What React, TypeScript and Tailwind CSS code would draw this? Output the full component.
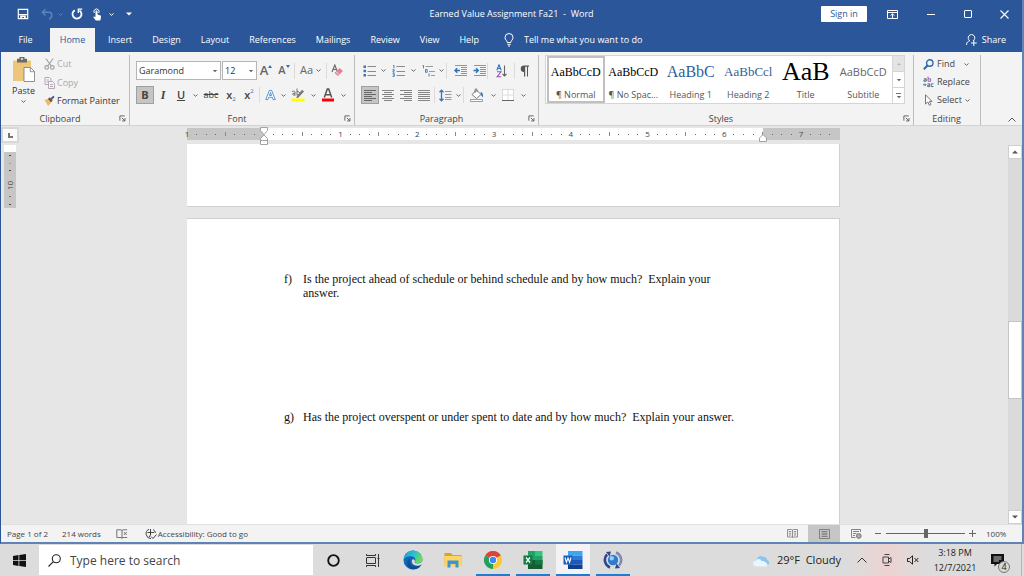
import React, { useState } from "react";

const TABS = ["Insert", "Design", "Layout", "References", "Mailings", "Review", "View", "Help"];

const STYLES = [
  { name: "¶ Normal", sample: "AaBbCcD", look: "text-[12px] text-black" },
  { name: "¶ No Spac...", sample: "AaBbCcD", look: "text-[12px] text-black" },
  { name: "Heading 1", sample: "AaBbC", look: "text-[16px] text-[#2f5f98]" },
  { name: "Heading 2", sample: "AaBbCcl", look: "text-[13px] text-[#2f5f98]" },
  { name: "Title", sample: "AaB", look: "text-[26px] text-black" },
  { name: "Subtitle", sample: "AaBbCcD", look: "font-['Open_Sans',sans-serif] text-[11px] text-[#666]" },
];

function Chevron({ className = "text-[#666]" }: { className?: string }) {
  return (
    <svg viewBox="0 0 5 3" className={`w-[5px] h-[3px] shrink-0 ${className}`} fill="none" stroke="currentColor" strokeWidth="1">
      <path d="M0.5 0.5L2.5 2.3L4.5 0.5" />
    </svg>
  );
}

function Triangle({ up = false, className = "text-[#555]" }: { up?: boolean; className?: string }) {
  return (
    <svg viewBox="0 0 6 4" className={`w-[6px] h-[4px] shrink-0 ${className}`} fill="currentColor">
      <path d={up ? "M0 3.5L3 0.5L6 3.5Z" : "M0 0.5L3 3.5L6 0.5Z"} />
    </svg>
  );
}

interface ToolProps {
  label: string;
  width?: string;
  active?: boolean;
  children: React.ReactNode;
}

function Tool({ label, width = "w-[18px]", active = false, children }: ToolProps) {
  return (
    <button
      aria-label={label}
      title={label}
      className={`${width} h-[18px] shrink-0 flex items-center justify-center ${
        active ? "bg-[#c5c5c5] border border-[#a0a0a0]" : "hover:bg-[#d5d5d5]"
      }`}
    >
      {children}
    </button>
  );
}

function Divider() {
  return <span className="w-px h-4 mx-px shrink-0 bg-[#dcdcdc]" />;
}

interface GroupProps {
  title: string;
  width: string;
  launcher?: boolean;
  children: React.ReactNode;
}

function Group({ title, width, launcher = true, children }: GroupProps) {
  return (
    <section aria-label={title} className={`${width} flex flex-col mt-[3px] border-r border-[#bdbdbd]`}>
      <div className="h-[57px]">{children}</div>
      <div className="flex items-center h-[13px] mr-px">
        <span className="flex-1 text-center text-[#444]">{title}</span>
        {launcher && (
          <button aria-label={`${title} settings`} className="w-[9px] h-[9px]">
            <svg viewBox="0 0 8 8" className="w-[7px] h-[7px]" fill="none" stroke="#555" strokeWidth="1">
              <path d="M1 6.5V1H6.5M3.3 3.3L6.5 6.5M6.8 3.5V6.8H3.5" />
            </svg>
          </button>
        )}
      </div>
    </section>
  );
}

function Lines({ rows, muted = false }: { rows: [number, number][]; muted?: boolean }) {
  return (
    <svg viewBox="0 0 12 13" className="w-3 h-[13px]" stroke={muted ? "#858585" : "#666"} strokeWidth="1">
      {rows.map(([from, to], i) => (
        <path key={i} d={`M${from} ${i * 2 + 1.5}H${to}`} />
      ))}
    </svg>
  );
}

function TitleBar() {
  return (
    <header className="grid grid-cols-[1fr_auto_1fr] items-center h-7 text-white text-[9px]">
      <div className="flex items-center pl-4">
        <button aria-label="Save" className="w-[14px]">
          <svg viewBox="0 0 12 12" className="w-3 h-3" fill="none" stroke="#fff" strokeWidth="1.2">
            <path d="M1.3 1.3H10.7V10.7H1.3ZM1.5 6.6H10.5" />
            <path d="M3.2 7.5H8.8V10.7H7V9H5.2V10.7H3.2Z" fill="#fff" stroke="none" />
          </svg>
        </button>
        <button aria-label="Undo" className="w-[14px] ml-[10px] text-[#5f83bd]">
          <svg viewBox="0 0 12 12" className="w-3 h-3" fill="none" stroke="currentColor" strokeWidth="1.4">
            <path d="M4.5 1.2L1.3 4.3L4.5 7.4M1.3 4.3H8C12 4.5 11.5 10 8 11" />
          </svg>
        </button>
        <Chevron className="text-[#5f83bd] ml-[3px]" />
        <button aria-label="Repeat" className="w-[14px] ml-2">
          <svg viewBox="0 0 12 12" className="w-3 h-3" fill="none" stroke="#fff" strokeWidth="1.8">
            <path d="M8.5 2.4A4.5 4.5 0 1 1 3.8 2.2" />
            <path d="M7.3 5V1.2H11.2" strokeWidth="1.3" />
          </svg>
        </button>
        <button aria-label="Touch mode" className="w-[14px] ml-[6px]">
          <svg viewBox="0 0 12 13" className="w-3 h-[13px]" fill="#fff">
            <path d="M4.5 3.5A1 1 0 0 1 6.5 3.5V6.5L9.5 7.4Q10.3 7.8 10 9L9.3 12.5H4.8L2.2 9Q2.8 8 4.5 9Z" />
            <path d="M3.3 5A2.6 2.6 0 1 1 7.7 5" fill="none" stroke="#fff" strokeWidth="1" />
          </svg>
        </button>
        <Chevron className="text-white ml-1" />
        <button aria-label="Customize toolbar" className="ml-3">
          <Triangle className="text-white" />
        </button>
      </div>
      <h1 className="whitespace-pre">Earned Value Assignment Fa21{"  -  "}Word</h1>
      <div className="flex items-center justify-end">
        <button className="h-4 w-[46px] rounded-[1px] bg-white text-[#2b579a] leading-4">Sign in</button>
        <button aria-label="Ribbon display options" className="w-[39px] ml-[6px] flex justify-center">
          <svg viewBox="0 0 11 9" className="w-[11px] h-[9px]" fill="none" stroke="#fff" strokeWidth="1">
            <path d="M0.5 0.5H10.5V8.5H0.5ZM0.5 2.5H10.5M5.5 8V4M3.5 5.7L5.5 3.8L7.5 5.7" />
          </svg>
        </button>
        <button aria-label="Minimize" className="w-[37px] flex justify-center">
          <span className="w-2 h-px bg-white" />
        </button>
        <button aria-label="Maximize" className="w-[37px] flex justify-center">
          <span className="w-2 h-2 border border-white rounded-[1px]" />
        </button>
        <button aria-label="Close" className="w-9 flex justify-center">
          <svg viewBox="0 0 9 9" className="w-[9px] h-[9px]" stroke="#fff" strokeWidth="1.1">
            <path d="M0.5 0.5L8.5 8.5M8.5 0.5L0.5 8.5" />
          </svg>
        </button>
      </div>
    </header>
  );
}

function TabBar() {
  return (
    <nav className="flex items-stretch h-6 text-white text-[9px]">
      <button className="w-[49px]">File</button>
      <button className="w-[45px] mr-[3px] bg-[#f3f3f3] text-[#2b579a]">Home</button>
      {TABS.map((tab) => (
        <button key={tab} className="px-[10px]">{tab}</button>
      ))}
      <label className="flex items-center gap-[10px] pl-[15px] flex-1">
        <svg viewBox="0 0 10 14" className="w-[10px] h-[14px]" fill="none" stroke="#fff" strokeWidth="1">
          <path d="M3.2 9.5C3.2 7.5 1 7 1 4.5A4 4 0 0 1 9 4.5C9 7 6.8 7.5 6.8 9.5ZM3.3 11.3H6.7M4 13H6" />
        </svg>
        <input
          aria-label="Tell me what you want to do"
          placeholder="Tell me what you want to do"
          className="w-40 bg-transparent outline-none placeholder:text-white"
        />
      </label>
      <button className="flex items-center gap-[5px] pr-4">
        <svg viewBox="0 0 11 12" className="w-[11px] h-3" fill="none" stroke="#fff" strokeWidth="1">
          <path d="M0.5 11C0.5 8.5 2 7.3 3.8 6.7A3.3 3.3 0 1 1 7.2 6.7M7.8 6V12M5 9H10.8" />
        </svg>
        Share
      </button>
    </nav>
  );
}

function ClipboardGroup() {
  return (
    <Group title="Clipboard" width="w-[129px]">
      <div className="flex">
        <button className="w-[43px] h-[54px] pl-[2px] flex flex-col items-center text-[#333]">
          <svg viewBox="0 0 24 26" className="w-6 h-[26px] mt-px shrink-0">
            <path d="M1 4.5H19V25H1Z" fill="#edc67c" />
            <path d="M5 2.8H7.5V1H12.5V2.8H15V6.5H5Z" fill="#6b6b6b" />
            <path d="M9 2.2H11V3.7H9Z" fill="#f3f3f3" />
            <path d="M12 11.5H18.5L22.5 15.5V25.5H12Z" fill="#fff" stroke="#777" strokeWidth="0.8" />
            <path d="M18.3 11.7V15.7H22.3" fill="none" stroke="#777" strokeWidth="0.8" />
          </svg>
          <span className="leading-[18px]">Paste</span>
          <Chevron />
        </button>
        <div className="flex flex-col">
          <button className="flex items-center gap-[2px] h-[18px] text-[#aaa]">
            <svg viewBox="0 0 11 12" className="w-[11px] h-3" fill="none" stroke="#a2a2a2" strokeWidth="1.2">
              <path d="M1.8 0.5L7.4 8M9.2 0.5L3.6 8" />
              <circle cx="2.7" cy="9.4" r="1.8" />
              <circle cx="8.3" cy="9.4" r="1.8" />
            </svg>
            Cut
          </button>
          <button className="flex items-center gap-[2px] h-[19px] text-[#aaa]">
            <svg viewBox="0 0 11 12" className="w-[11px] h-3" fill="#f8f4f8" stroke="#b5a9b5" strokeWidth="1">
              <path d="M1 0.5H5.5L7 2V7.5H1ZM2.5 3H5M2.5 5H5" />
              <path d="M4.5 4.5H8.5L10.5 6.5V11.5H4.5ZM6 7.5H9M6 9.5H9" />
            </svg>
            Copy
          </button>
          <button className="flex items-center gap-[2px] h-[18px] text-[#333]">
            <svg viewBox="0 0 12 12" className="w-[11px] h-3">
              <path d="M0.5 5L4.5 3.5L8 7.5L4.5 11.5Z" fill="#edb968" />
              <path d="M4.3 3.8L6.2 2L9.5 5.5L7.8 7.3Z" fill="#555" />
              <path d="M8 3.8L10.8 1" stroke="#555" strokeWidth="2" />
            </svg>
            Format Painter
          </button>
        </div>
      </div>
    </Group>
  );
}

function FontGroup() {
  return (
    <Group title="Font" width="w-[225px]">
      <div className="flex flex-col gap-[6px] pt-[6px] pl-[6px]">
        <div className="flex items-center h-[19px]">
          <div className="relative w-[86px] pr-px">
            <select aria-label="Font name" className="appearance-none w-full h-[19px] pl-[2px] bg-white border border-[#b5b5b5] text-[#333]">
              <option>Garamond</option>
            </select>
            <Triangle className="absolute right-1 top-2 text-[#666] scale-75 pointer-events-none" />
          </div>
          <div className="relative w-[35px]">
            <select aria-label="Font size" className="appearance-none w-full h-[19px] pl-[2px] bg-white border border-[#b5b5b5] text-[#333]">
              <option>12</option>
            </select>
            <Triangle className="absolute right-[3px] top-2 text-[#666] scale-75 pointer-events-none" />
          </div>
          <Tool label="Increase font size">
            <span className="text-[13px] font-semibold text-[#666]">A</span>
            <svg viewBox="0 0 4 3" className="w-1 h-[3px] mb-2" fill="#2b73b8"><path d="M0 3L2 0L4 3Z" /></svg>
          </Tool>
          <Tool label="Decrease font size">
            <span className="text-[11px] font-semibold text-[#666]">A</span>
            <svg viewBox="0 0 4 3" className="w-1 h-[3px] mb-2" fill="#2b73b8"><path d="M0 0L2 3L4 0Z" /></svg>
          </Tool>
          <Divider />
          <Tool label="Change case" width="w-[29px]">
            <span className="text-[11px] text-[#666] mr-[3px]">Aa</span>
            <Chevron />
          </Tool>
          <Divider />
          <Tool label="Clear formatting">
            <svg viewBox="0 0 12 13" className="w-3 h-[13px]">
              <path d="M1 8L3.8 1L6.5 8M2 5.5H5.5" fill="none" stroke="#666" strokeWidth="1.1" />
              <path d="M3.5 9L8.5 4L12 7L7 12Z" fill="#e87f97" />
              <path d="M4.8 7.7L8.4 10.6" stroke="#f3f3f3" strokeWidth="0.8" />
            </svg>
          </Tool>
        </div>
        <div className="flex items-center h-[18px] text-[#444]">
          <Tool label="Bold" active><b className="text-[11px]">B</b></Tool>
          <Tool label="Italic"><i className="text-[12px] font-bold font-['Liberation_Serif',serif]">I</i></Tool>
          <Tool label="Underline"><u className="text-[11px] font-semibold">U</u></Tool>
          <Tool label="Underline style" width="w-[10px]"><Chevron /></Tool>
          <Tool label="Strikethrough" width="w-[22px]"><s className="text-[9px]">abc</s></Tool>
          <Tool label="Subscript"><span className="text-[11px] font-semibold">x</span><span className="text-[6px] text-[#2b73b8] mt-2">2</span></Tool>
          <Tool label="Superscript"><span className="text-[11px] font-semibold">x</span><span className="text-[6px] text-[#2b73b8] mb-2">2</span></Tool>
          <Divider />
          <Tool label="Text effects">
            <svg viewBox="0 0 12 12" className="w-[11px] h-3" fill="#fff" stroke="#4a8ccc" strokeWidth="1">
              <path d="M0.8 11L4.8 1H7.2L11.2 11H8.8L8 8.5H4L3.2 11ZM4.8 6.5H7.2L6 3.2Z" />
            </svg>
          </Tool>
          <Tool label="Text effects options" width="w-2"><Chevron /></Tool>
          <Tool label="Highlight color" width="w-[22px]">
            <svg viewBox="0 0 14 14" className="w-[14px] h-[14px]">
              <path d="M1 4A1.6 1.5 0 0 1 4 4V7.5M4 5.3H2A1.2 1.2 0 1 0 4 6.8M6 0.5V7.5M6 4A1.6 1.7 0 1 1 6 6.5" fill="none" stroke="#666" strokeWidth="0.9" />
              <path d="M5 9.5L11 1.8L13 3.5L7 10Z" fill="#777" />
              <path d="M0.5 10.5H13.5V13.5H0.5Z" fill="#ff0" />
            </svg>
          </Tool>
          <Tool label="Highlight options" width="w-2"><Chevron /></Tool>
          <Tool label="Font color" width="w-[22px]">
            <svg viewBox="0 0 12 14" className="w-3 h-[14px]">
              <path d="M2.3 9.5L5.3 1H6.7L9.7 9.5M3.3 6.7H8.7" fill="none" stroke="#555" strokeWidth="1.5" />
              <path d="M0 10.5H12V13.5H0Z" fill="#f00" />
            </svg>
          </Tool>
          <Tool label="Font color options" width="w-2"><Chevron /></Tool>
        </div>
      </div>
    </Group>
  );
}

function ListIcon({ kind }: { kind: "bullet" | "number" | "multi" }) {
  return (
    <svg viewBox="0 0 13 12" className="w-[13px] h-3" fill="none">
      {kind === "bullet" && (
        <>
          <path d="M0.5 0.5H3V3H0.5ZM0.5 4.8H3V7.2H0.5ZM0.5 9H3V11.5H0.5Z" fill="#3c76b5" />
          <path d="M4.5 1.5H13M4.5 6.5H13M4.5 10.5H13" stroke="#8a8a8a" />
        </>
      )}
      {kind === "number" && (
        <>
          <path d="M1 0.5H2V3.3M0.5 4.7H2.2V5.9H1V7.2H2.5M0.5 8.7H2.3V11.4H0.5M1 10H2.3" stroke="#3c76b5" strokeWidth="0.9" />
          <path d="M4.5 1.5H13M4.5 6.5H13M4.5 10.5H13" stroke="#8a8a8a" />
        </>
      )}
      {kind === "multi" && (
        <>
          <path d="M0.5 0.5H1.5V3.3M3.5 7.3V4.5H5.2V7.3H3.5M7 8.5V11.5" stroke="#3c76b5" strokeWidth="0.9" />
          <path d="M3.5 1.5H11M7 6.5H13M9 10.5H13" stroke="#9a9a9a" />
        </>
      )}
    </svg>
  );
}

function IndentIcon({ out = false }: { out?: boolean }) {
  return (
    <svg viewBox="0 0 13 11" className="w-[13px] h-[11px]" fill="none">
      <path d="M1 0.5H13M7 2.5H13M7 4.5H13M7 6.5H13M7 8.5H13M1 10.5H13" stroke="#888" strokeWidth="0.9" />
      <path d={out ? "M6 5.5H1.3M3.3 3.2L1 5.5L3.3 7.8" : "M0.5 5.5H5M3 3.2L5.3 5.5L3 7.8"} stroke="#2b73b8" strokeWidth="1.4" />
    </svg>
  );
}

function ParagraphGroup() {
  return (
    <Group title="Paragraph" width="w-[184px]">
      <div className="flex flex-col gap-[6px] pt-[6px] pl-[6px]">
        <div className="flex items-center h-[19px]">
          <Tool label="Bullets" width="w-4"><ListIcon kind="bullet" /></Tool>
          <Tool label="Bullet options" width="w-3"><Chevron /></Tool>
          <Tool label="Numbering"><ListIcon kind="number" /></Tool>
          <Tool label="Numbering options" width="w-3"><Chevron /></Tool>
          <Tool label="Multilevel list"><ListIcon kind="multi" /></Tool>
          <Tool label="Multilevel options" width="w-2"><Chevron /></Tool>
          <Divider />
          <Tool label="Decrease indent" width="w-6"><IndentIcon out /></Tool>
          <Tool label="Increase indent" width="w-[14px]"><IndentIcon /></Tool>
          <Divider />
          <Tool label="Sort" width="w-6">
            <svg viewBox="0 0 11 14" className="w-[11px] h-[14px]" fill="none" strokeWidth="1.1">
              <path d="M0.8 6.3L3 0.8L5.2 6.3M1.5 4.5H4.5" stroke="#2b73b8" />
              <path d="M1 7.8H5L1 12.8H5.2" stroke="#9256b5" />
              <path d="M8.5 1.5V12M6.5 10L8.5 12L10.5 10" stroke="#666" />
            </svg>
          </Tool>
          <Divider />
          <Tool label="Show marks" width="w-4">
            <svg viewBox="0 0 9 12" className="w-[9px] h-3">
              <path d="M4 7A3.2 3.2 0 0 1 4 0.5H9V1.7H8V11.5H7V1.7H5.2V11.5H4Z" fill="#555" />
            </svg>
          </Tool>
        </div>
        <div className="flex items-center h-[18px]">
          <Tool label="Align left" active><Lines rows={[[0, 12], [0, 8], [0, 12], [0, 8], [0, 12], [0, 8]]} /></Tool>
          <Tool label="Center"><Lines muted rows={[[0, 12], [2, 10], [0, 12], [2, 10], [0, 12], [2, 10]]} /></Tool>
          <Tool label="Align right"><Lines muted rows={[[0, 12], [4, 12], [0, 12], [4, 12], [0, 12], [4, 12]]} /></Tool>
          <Tool label="Justify"><Lines muted rows={[[0, 12], [0, 12], [0, 12], [0, 12], [0, 12], [0, 12]]} /></Tool>
          <Divider />
          <Tool label="Line spacing">
            <svg viewBox="0 0 13 13" className="w-[13px] h-[13px]" fill="none">
              <path d="M2.5 1V12M0.5 3.3L2.5 1.2L4.5 3.3M0.5 9.7L2.5 11.8L4.5 9.7" stroke="#3c76b5" strokeWidth="1.3" />
              <path d="M6 2.5H12.5M6 5.5H12.5M6 8.5H12.5M6 10.5H12.5" stroke="#999" />
            </svg>
          </Tool>
          <Tool label="Spacing options" width="w-2"><Chevron /></Tool>
          <Divider />
          <Tool label="Shading" width="w-6">
            <svg viewBox="0 0 14 14" className="w-[14px] h-[14px]">
              <path d="M2 6.5L6.5 2L11 6.5L6.5 10.5Z" fill="#fff" stroke="#777" />
              <path d="M5 5V1.5Q6 0 7 1.5V4" fill="none" stroke="#777" />
              <path d="M10.5 4Q13.8 4.5 12.8 9.5L11 7Z" fill="#3c76b5" />
              <path d="M0.5 11.5H12.5V13.5H0.5Z" fill="#fff" stroke="#888" strokeWidth="0.8" />
            </svg>
          </Tool>
          <Tool label="Shading options" width="w-2"><Chevron /></Tool>
          <Tool label="Borders" width="w-[22px]">
            <svg viewBox="0 0 12 12" className="w-3 h-3" fill="#fff">
              <path d="M0.5 0.5H11.5V11.5H0.5Z" stroke="#bbb" strokeDasharray="1 1" />
              <path d="M6 1V11M1 6H11" stroke="#ddd" />
              <path d="M0 11.5H12" stroke="#666" />
            </svg>
          </Tool>
          <Tool label="Border options" width="w-2"><Chevron /></Tool>
        </div>
      </div>
    </Group>
  );
}

function StylesGroup() {
  const [selected, setSelected] = useState(0);

  return (
    <Group title="Styles" width="flex-1 min-w-0">
      <div className="flex h-[49px] ml-[6px] mr-2 border border-[#d5d5d5] bg-white">
        <div className="flex flex-1 min-w-0 pl-px">
          {STYLES.map((style, i) => (
            <button
              key={style.name}
              onClick={() => setSelected(i)}
              className={`flex-1 basis-0 min-w-0 flex flex-col items-center border-2 ${
                i === selected ? "border-[#c0c0c0]" : "border-transparent"
              }`}
            >
              <span className={`flex items-center justify-center w-full h-7 leading-7 font-['Liberation_Serif',serif] ${style.look}`}>
                {style.sample}
              </span>
              <span className="whitespace-nowrap leading-[17px] text-[#555]">{style.name}</span>
            </button>
          ))}
        </div>
        <div className="flex flex-col w-3 border-l border-[#d5d5d5] divide-y divide-[#d5d5d5]">
          <button aria-label="Previous styles" className="flex-1 flex items-center justify-center bg-[#e4e4e4]">
            <Triangle up className="text-[#b5b5b5] scale-75" />
          </button>
          <button aria-label="Next styles" className="flex-1 flex items-center justify-center">
            <Triangle className="text-[#666] scale-75" />
          </button>
          <button aria-label="More styles" className="flex-1 flex flex-col items-center justify-center gap-px">
            <span className="w-[5px] h-px bg-[#777]" />
            <Triangle className="text-[#666] scale-75" />
          </button>
        </div>
      </div>
    </Group>
  );
}

function EditingGroup() {
  return (
    <Group title="Editing" width="w-[67px]" launcher={false}>
      <div className="flex flex-col pl-[9px] text-[#444]">
        <button className="flex items-center gap-[3px] h-[18px]">
          <svg viewBox="0 0 11 11" className="w-[11px] h-[11px]" fill="none" stroke="#2b6cb0" strokeWidth="1.4">
            <circle cx="6.8" cy="4" r="3.2" />
            <path d="M4.5 6.5L0.8 10.3" strokeWidth="2" />
          </svg>
          Find
          <Chevron className="ml-[6px] text-[#666]" />
        </button>
        <button className="flex items-center gap-[3px] h-[18px]">
          <svg viewBox="0 0 12 12" className="w-[11px] h-3" fill="none" strokeWidth="1">
            <path d="M1 2.5H3.5V5.2H1V3.8H3.5" stroke="#666" />
            <path d="M5.5 0V5.2H8.3V2.5H5.5" stroke="#9256b5" />
            <path d="M0 9H3M1.8 7.5L3.3 9L1.8 10.5" stroke="#2b73b8" />
            <path d="M5 8H7.3V11H5V9.5H7.3" stroke="#666" />
            <path d="M11.5 8H9V11H11.5" stroke="#2b73b8" />
          </svg>
          Replace
        </button>
        <button className="flex items-center gap-[3px] h-[18px]">
          <svg viewBox="0 0 11 12" className="w-[11px] h-3" fill="#fff" stroke="#666" strokeWidth="0.9">
            <path d="M2.5 0.8V10L4.8 8L6.3 11.3L7.8 10.6L6.4 7.4H9Z" />
          </svg>
          Select
          <Chevron />
        </button>
      </div>
    </Group>
  );
}

// The page is 8.5 inches wide and the ruler carries one mark for every eighth.
function Ruler() {
  return (
    <div className="relative flex h-3 w-[653px] mx-auto bg-[#c6c6c6]">
      <div className="w-[77px]" />
      <div className="flex-1 bg-white" />
      <div className="w-[77px]" />
      <div className="absolute inset-0 flex items-center justify-between text-[8px] text-[#444]">
        {Array.from({ length: 69 }, (_, i) => {
          const inch = Math.abs(i / 8 - 1);
          return (
            <span key={i} className="w-0 flex justify-center">
              {i === 8 || i === 68 ? null : i % 8 === 0 ? (
                <span>{inch}</span>
              ) : (
                <span className={`w-px shrink-0 ${i % 4 === 0 ? "h-1 bg-[#888]" : "h-px bg-[#666]"}`} />
              )}
            </span>
          );
        })}
      </div>
      <svg viewBox="0 0 8 18" className="absolute left-[73px] -top-px w-2 h-[18px]" fill="#fff" stroke="#999" strokeWidth="0.9">
        <path d="M0.5 0.5H7.5V3.5L4 7.5L0.5 3.5Z" />
        <path d="M4 8L7.5 11.5V17.5H0.5V11.5ZM0.5 13.5H7.5" />
      </svg>
      <svg viewBox="0 0 8 8" className="absolute right-[73px] top-[6px] w-2 h-2" fill="#fff" stroke="#999" strokeWidth="0.9">
        <path d="M4 0.5L7.5 4V7.5H0.5V4Z" />
      </svg>
    </div>
  );
}

function SideRuler() {
  return (
    <div className="w-[18px] shrink-0 flex flex-col items-start gap-[2px]">
      <button aria-label="Tab stop" className="w-[18px] h-4 mt-px border-2 border-[#d8d8d8] bg-[#fbfbfb] flex items-center justify-center">
        <span className="w-[5px] h-[5px] border-l-2 border-b-2 border-[#777]" />
      </button>
      <div className="ml-[3px] w-3">
        <div className="h-[7px] bg-white" />
        <div className="h-14 bg-[#c6c6c6] flex flex-col items-center justify-around">
          <span className="w-[2px] h-px bg-[#444]" />
          <span className="w-[2px] h-px bg-[#999]" />
          <span className="w-[2px] h-px bg-[#444]" />
          <span className="h-3 text-[8px] leading-3 text-[#444] [writing-mode:vertical-rl] rotate-180">10</span>
          <span className="w-[2px] h-px bg-[#777]" />
          <span className="w-[2px] h-px bg-[#444]" />
        </div>
      </div>
    </div>
  );
}

function ScrollBar() {
  return (
    <div className="w-[14px] shrink-0 flex flex-col pt-[19px] bg-[#e6e6e6]">
      <button aria-label="Scroll up" className="h-[14px] border border-[#cfcfcf] bg-white flex items-center justify-center">
        <Triangle up />
      </button>
      <div className="flex-1 flex flex-col bg-[#dadada]">
        <div className="grow-[163]" />
        <div className="h-[78px] border border-[#c4c4c4] bg-white" />
        <div className="grow-[112]" />
      </div>
      <button aria-label="Scroll down" className="h-[14px] border border-[#cfcfcf] bg-white flex items-center justify-center">
        <Triangle />
      </button>
    </div>
  );
}

function Workspace() {
  return (
    <main className="flex flex-1 min-h-0 bg-[#e6e6e6]">
      <SideRuler />
      <div className="flex-1 flex flex-col min-w-0 pt-[2px] overflow-hidden">
        <Ruler />
        <div className="w-[653px] h-[63px] shrink-0 mx-auto mt-1 bg-white border-b border-r border-[#d0d0d0]" />
        <article className="w-[653px] flex-1 mx-auto mt-[11px] px-24 pt-[53px] bg-white border-t border-r border-[#d0d0d0] font-['Liberation_Serif',serif] text-[12px] leading-[14px] text-[#111]">
          <ol className="flex flex-col gap-[110px] pl-px">
            <li className="flex">
              <span className="w-[19px] shrink-0">f)</span>
              <p className="max-w-[440px]">
                Is the project ahead of schedule or behind schedule and by how much?&nbsp; Explain your answer.
              </p>
            </li>
            <li className="flex">
              <span className="w-[19px] shrink-0">g)</span>
              <p className="whitespace-nowrap">
                Has the project overspent or under spent to date and by how much?&nbsp; Explain your answer.
              </p>
            </li>
          </ol>
        </article>
      </div>
      <ScrollBar />
    </main>
  );
}

function StatusBar() {
  const [zoom, setZoom] = useState(100);

  return (
    <footer className="flex items-center h-[18px] shrink-0 border-t border-[#e0e0e0] bg-[#f3f3f3] text-[8px] text-[#444]">
      <span className="ml-[6px]">Page 1 of 2</span>
      <span className="ml-[14px]">214 words</span>
      <button aria-label="Proofing" className="ml-[15px]">
        <svg viewBox="0 0 12 10" className="w-3 h-[10px]" fill="none" stroke="#666" strokeWidth="0.9">
          <path d="M6 1.5V9.3M6 1.5L5 0.8H0.8V8.5H5L6 9.3L7 8.5H11.2M6 1.5L7 0.8H11.2M7.8 3L10.8 6M10.8 3L7.8 6" />
        </svg>
      </button>
      <button className="ml-[17px] flex items-center gap-px">
        <svg viewBox="0 0 12 12" className="w-3 h-3" fill="none" stroke="#444" strokeWidth="1">
          <path d="M4 1.3A4.8 4.8 0 0 0 6 10.5M8 1.5A4.8 4.8 0 0 1 10.5 5M2.5 4.5H9M5.5 1V7M5.5 7L4 9M6 8.5L8 10.5L11.5 6.5" />
        </svg>
        Accessibility: Good to go
      </button>
      <div className="flex-1" />
      <button aria-label="Read mode" className="w-8 flex justify-center">
        <svg viewBox="0 0 11 9" className="w-[11px] h-[9px]" fill="none" stroke="#777" strokeWidth="0.8">
          <path d="M5.5 1V8.5M0.5 0.5H4.5L5.5 1L6.5 0.5H10.5V8H6.5L5.5 8.5L4.5 8H0.5ZM1.8 2.5H4.2M1.8 4.2H4.2M1.8 6H4.2M6.8 2.5H9.2M6.8 4.2H9.2M6.8 6H9.2" />
        </svg>
      </button>
      <button aria-label="Print layout" className="w-8 h-full flex items-center justify-center bg-[#c6c6c6]">
        <svg viewBox="0 0 11 10" className="w-[11px] h-[10px]" fill="none" stroke="#777" strokeWidth="0.9">
          <path d="M0.5 0.5H10.5V9.5H0.5ZM2.5 2.5H8.5M2.5 4.2H8.5M2.5 5.8H8.5M2.5 7.5H8.5" />
        </svg>
      </button>
      <button aria-label="Web layout" className="w-8 flex justify-center">
        <svg viewBox="0 0 11 10" className="w-[11px] h-[10px]" fill="none" stroke="#777" strokeWidth="0.9">
          <path d="M4.5 8.5H0.5V0.5H9.5V3M2 2.5H8M2 4.5H5.5M2 6.5H4" />
          <circle cx="7.8" cy="7" r="2.4" fill="#aaa" />
        </svg>
      </button>
      <button aria-label="Zoom out" className="w-2 ml-[2px] flex justify-center"><span className="w-[6px] h-px bg-[#666]" /></button>
      <input
        type="range"
        min={10}
        max={190}
        value={zoom}
        onChange={(e) => setZoom(Number(e.target.value))}
        aria-label="Zoom"
        className="appearance-none w-[79px] h-px mx-1 bg-[#666] [&::-webkit-slider-thumb]:appearance-none [&::-webkit-slider-thumb]:w-1 [&::-webkit-slider-thumb]:h-[9px] [&::-webkit-slider-thumb]:bg-[#666]"
      />
      <button aria-label="Zoom in" className="w-2">
        <svg viewBox="0 0 7 7" className="w-[7px] h-[7px]" stroke="#666"><path d="M0 3.5H7M3.5 0V7" /></svg>
      </button>
      <span className="w-[22px] ml-[9px] mr-[14px]">{zoom}%</span>
    </footer>
  );
}

interface TaskProps {
  label: string;
  running?: boolean;
  focused?: boolean;
  children: React.ReactNode;
}

function TaskButton({ label, running = false, focused = false, children }: TaskProps) {
  return (
    <button aria-label={label} className="w-10 px-[3px] flex flex-col">
      <span className={`w-full flex-1 pt-[2px] flex items-center justify-center ${focused ? "bg-[#f3f3f5]" : ""}`}>{children}</span>
      <span className={`w-full h-[2px] ${running ? "bg-[#1a7fd4]" : ""}`} />
    </button>
  );
}

function TaskBar() {
  return (
    <div className="flex items-stretch h-8 shrink-0 bg-[#dcdcdc] text-[#222]">
      <button aria-label="Start" className="w-[39px] flex items-center justify-center">
        <svg viewBox="0 0 13 13" className="w-[13px] h-[13px]" fill="#111">
          <path d="M0 1.9L5.5 1.1V6H0ZM6.3 1L13 0V6H6.3ZM0 6.8H5.5V11.9L0 11.1ZM6.3 6.8H13V13L6.3 12Z" />
        </svg>
      </button>
      <label className="w-[274px] my-px pl-[9px] pt-px flex items-center gap-[9px] bg-white">
        <svg viewBox="0 0 13 13" className="w-[13px] h-[13px] shrink-0" fill="none" stroke="#222" strokeWidth="1.1">
          <circle cx="8.3" cy="4.7" r="4" />
          <path d="M5.4 7.6L0.5 12.5" />
        </svg>
        <input aria-label="Search" placeholder="Type here to search" className="w-full text-[12px] outline-none bg-transparent placeholder:text-[#444]" />
      </label>
      <TaskButton label="Cortana">
        <svg viewBox="0 0 13 13" className="w-[13px] h-[13px]" fill="none" stroke="#111" strokeWidth="1.8"><circle cx="6.5" cy="6.5" r="5.3" /></svg>
      </TaskButton>
      <TaskButton label="Task view">
        <svg viewBox="0 0 14 13" className="w-[14px] h-[13px]" fill="none" stroke="#333" strokeWidth="1">
          <path d="M0.5 0V1.5H9.5V0M0.5 13V11.5H9.5V13M0.5 4V9.5M9.5 4V9.5M0.5 3.5H9.5M0.5 9.5H9.5M12.5 0V13M11.5 4.5H13.5" />
        </svg>
      </TaskButton>
      <TaskButton label="Microsoft Edge">
        <svg viewBox="0 0 20 20" className="w-5 h-5">
          <defs>
            <linearGradient id="edge-top" x1="0" y1="0" x2="1" y2="0.4">
              <stop offset="0" stopColor="#1c9ade" />
              <stop offset="0.55" stopColor="#2bbfd0" />
              <stop offset="1" stopColor="#6cdc5a" />
            </linearGradient>
          </defs>
          <circle cx="10" cy="10" r="9.5" fill="#1267b4" />
          <path d="M0.5 10C1 4 5 0.5 10 0.5C16 0.5 19.5 5 19.5 9C19.5 12 17 13.3 14.5 13.3C12.5 13.3 11.5 12.5 12 11.7C13.3 9 11.5 6.5 8 6.3C4.5 6 1.5 7.5 0.5 10Z" fill="url(#edge-top)" />
          <path d="M8.3 8C5 10 6 17 12.5 16.5C15 16.5 17.5 15.5 18.5 14.5C16 19.5 10 20.5 6.5 18C3 15.5 3.5 9.5 8.3 8Z" fill="#0f4d93" />
          <path d="M9.5 9.5C7.5 12 10 16 15 15.7C17 15.5 18.3 14.8 19 14C20 12 19.5 11 19.5 10C19 12.5 17 13.4 14.5 13.4C11.5 13.3 11.3 12.2 12 11C12 10 10.5 8.7 9.5 9.5Z" fill="#dcdcdc" />
        </svg>
      </TaskButton>
      <TaskButton label="File Explorer">
        <svg viewBox="0 0 18 16" className="w-[18px] h-4">
          <path d="M0.5 1H7L8.5 3H17.5V14H0.5Z" fill="#dda41f" />
          <path d="M0.5 4H17.5V14.5H0.5Z" fill="#ffd664" />
          <path d="M3.5 8.5H14.5V15.5H11.5V12H6.5V15.5H3.5Z" fill="#3a94d6" />
        </svg>
      </TaskButton>
      <TaskButton label="Google Chrome" running>
        <svg viewBox="0 0 18 18" className="w-[18px] h-[18px]">
          <path d="M9 9L1.2 4.5A9 9 0 0 1 16.8 4.5Z" fill="#dc4437" />
          <path d="M9 9L16.8 4.5A9 9 0 0 1 9 18Z" fill="#fbc934" />
          <path d="M9 9V18A9 9 0 0 1 1.2 4.5Z" fill="#24a05a" />
          <path d="M9 4.8H16.9L16.8 4.5L9 4Z" fill="#dc4437" />
          <circle cx="9" cy="9" r="4.1" fill="#fff" />
          <circle cx="9" cy="9" r="3.2" fill="#4285f4" />
        </svg>
      </TaskButton>
      <TaskButton label="Excel" running>
        <svg viewBox="0 0 20 18" className="w-5 h-[18px]">
          <path d="M5 0H12V9H5Z" fill="#21a366" />
          <path d="M12 0H19.5V5H12Z" fill="#33c481" />
          <path d="M12 5H19.5V9H12Z" fill="#21a366" />
          <path d="M5 9H19.5V18H5Z" fill="#185c37" />
          <path d="M12 9H19.5V13.5H12Z" fill="#107c41" />
          <path d="M0.5 4.5H9.5V13.5H0.5Z" fill="#107c41" />
          <path d="M3 6.5L7 11.5M7 6.5L3 11.5" stroke="#fff" strokeWidth="1.3" />
        </svg>
      </TaskButton>
      <TaskButton label="Word" running focused>
        <svg viewBox="0 0 20 18" className="w-5 h-[18px]">
          <path d="M5 0H19.5V4.5H5Z" fill="#41a5ee" />
          <path d="M5 4.5H19.5V9H5Z" fill="#2b7cd3" />
          <path d="M5 9H19.5V13.5H5Z" fill="#185abd" />
          <path d="M5 13.5H19.5V18H5Z" fill="#103f91" />
          <path d="M0.5 4.5H9.5V13.5H0.5Z" fill="#185abd" />
          <path d="M2 6.5L3.4 11.3L5 7L6.6 11.3L8 6.5" fill="none" stroke="#fff" strokeWidth="1.1" />
        </svg>
      </TaskButton>
      <TaskButton label="Sync" running>
        <svg viewBox="0 0 20 20" className="w-5 h-5" fill="none">
          <circle cx="10" cy="10" r="5.2" fill="#2e7bd0" />
          <circle cx="8.8" cy="8.3" r="2.2" fill="#9ccbf2" />
          <path d="M7 17.5A8.1 8.1 0 0 1 4 4.5" stroke="#32468c" strokeWidth="2.6" />
          <path d="M13 2.5A8.1 8.1 0 0 1 16 15.5" stroke="#7c8ab5" strokeWidth="2.6" />
          <path d="M3 2L8 1.5L6.5 6.5Z" fill="#32468c" />
          <path d="M17 18L12 18.5L13.5 13.5Z" fill="#32468c" />
        </svg>
      </TaskButton>
      <div className="flex-1" />
      <button className="flex items-center gap-[7px] pt-px text-[11px] whitespace-pre">
        <svg viewBox="0 0 18 13" className="w-[18px] h-[13px]">
          <path d="M6 11.5C1 12 0.5 6.5 4.5 6C5 2.5 9 0.5 11.5 3C14.5 3 15 5 15 6C18 6.5 18 11.5 14.5 11.5Z" fill="#8cc6f0" />
          <path d="M5 12.5C0 12.5 0 7 4 6.5C6 4 9 5 9.5 7C12 6.5 14 8 15.5 10.5Q16 12 14 12.5Z" fill="#eaf6ff" />
        </svg>
        29°F{"  "}Cloudy
      </button>
      <div className="w-[77px] ml-2 flex items-center justify-around bg-gradient-to-r from-[#dcdcdc] via-[#ecd3d1] to-[#dcdcdc]">
        <button aria-label="Hidden icons">
          <svg viewBox="0 0 10 6" className="w-[10px] h-[6px]" fill="none" stroke="#333"><path d="M0.5 5.5L5 1L9.5 5.5" /></svg>
        </button>
        <button aria-label="Meet now">
          <svg viewBox="0 0 10 12" className="w-[10px] h-3" fill="none" stroke="#444" strokeWidth="1">
            <path d="M2.5 0.5H7.5M2.5 11.5H7.5M1 3H6.5V9H1ZM6.5 5L9 3.5V8.5L6.5 7" />
          </svg>
        </button>
        <button aria-label="Muted">
          <svg viewBox="0 0 12 10" className="w-3 h-[10px]" fill="none" stroke="#222" strokeWidth="1">
            <path d="M0.5 3.5H2.5L5.5 0.8V9.2L2.5 6.5H0.5ZM7.5 3L11.3 7M11.3 3L7.5 7" />
          </svg>
        </button>
      </div>
      <time className="w-[58px] flex flex-col items-center justify-center text-[9px] leading-[15px]">
        <span>3:18 PM</span>
        <span>12/7/2021</span>
      </time>
      <button aria-label="Notifications" className="relative w-[38px] mr-[2px] pr-4 flex items-center justify-end border-r border-[#b5b5b5]">
        <svg viewBox="0 0 14 13" className="w-[14px] h-[13px]">
          <path d="M0 0H13V10H6L3.5 12.5V10H0Z" fill="#111" />
          <path d="M2.5 3H10.5M2.5 5H10.5M2.5 7H8" stroke="#ddd" strokeWidth="0.9" />
        </svg>
        <span className="absolute right-[11px] bottom-[3px] w-3 h-3 rounded-full border border-[#777] bg-[#d8d8d8] text-[9px] leading-[10px] text-center">4</span>
      </button>
    </div>
  );
}

export default function App() {
  return (
    <div className="h-screen flex flex-col overflow-hidden font-['Open_Sans','Noto_Sans',sans-serif]">
      <div className="flex-1 min-h-0 flex flex-col border-l border-l-[#2b579a] border-r-2 border-r-[#6083b5] border-b-2 border-b-[#6083b5]">
        <div className="shrink-0 bg-[#2b579a]">
          <TitleBar />
          <TabBar />
        </div>
        <div className="flex shrink-0 bg-[#f3f3f3] border-b border-[#d2d2d2] text-[9px]">
          <ClipboardGroup />
          <FontGroup />
          <ParagraphGroup />
          <StylesGroup />
          <EditingGroup />
          <button aria-label="Collapse the ribbon" className="w-[41px] flex items-end justify-end pb-[3px] pr-[6px]">
            <svg viewBox="0 0 8 5" className="w-2 h-[5px]" fill="none" stroke="#555"><path d="M0.5 4.5L4 1L7.5 4.5" /></svg>
          </button>
        </div>
        <Workspace />
        <StatusBar />
      </div>
      <TaskBar />
    </div>
  );
}
